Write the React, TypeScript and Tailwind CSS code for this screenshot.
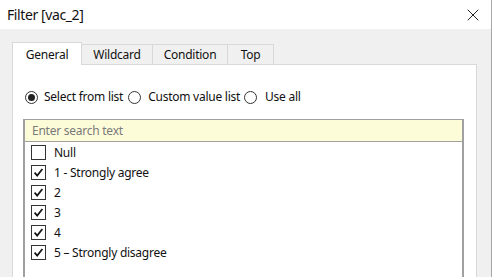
import {X} from "lucide-react";

const items = [
  {label: "Null", checked: false},
  {label: "1 - Strongly agree", checked: true},
  {label: "2", checked: true},
  {label: "3", checked: true},
  {label: "4", checked: true},
  {label: "5 – Strongly disagree", checked: true},
];

const tabs = ["General", "Wildcard", "Condition", "Top"];
const tabWidths = ["w-[70px]", "w-[71px]", "w-[75px]", "w-[46px]"];

const Radio = ({on}: {on: boolean}) => (
  <span className="w-[13px] h-[13px] rounded-full border border-[#333] bg-white flex items-center justify-center shrink-0">
    {on && <span className="w-[7px] h-[7px] rounded-full bg-[#222]" />}
  </span>
);

const Check = ({on}: {on: boolean}) => (
  <span className="w-[15px] h-[15px] border border-[#333] bg-white flex items-center justify-center shrink-0">
    {on && (
      <svg width="11" height="11" viewBox="0 0 11 11">
        <path d="M1.6 5.6 L4.2 8.6 L9.4 2" fill="none" stroke="#111" strokeWidth="1.7" />
      </svg>
    )}
  </span>
);

export default function App() {
  return (
    <main className="w-[492px] h-[277px] overflow-hidden bg-[#f0f0f0] flex flex-col text-[12px] tracking-[-0.25px] text-[#111] border-r border-[#a8a8a8]" style={{fontFamily: '"Noto Sans", "Open Sans", sans-serif'}}>
      <header className="h-[29px] bg-white flex items-center justify-between pl-[7px] pr-[8px] shrink-0">
        <h1 className="text-[14px] leading-none tracking-[-0.4px]">Filter [vac_2]</h1>
        <X size={20} strokeWidth={1.2} className="text-[#222]" />
      </header>

      <div className="flex-1 flex flex-col pt-[13px] pl-[12px] pr-[14px]">
        {/* tabs */}
        <div className="flex items-end h-[22px]">
          {tabs.map((t, i) =>
            i === 0 ? (
              <div key={t} className={`${tabWidths[i]} h-[23px] -mb-px relative z-10 bg-white border border-b-0 border-[#d9d9d9] flex items-center justify-center pt-[1px]`}>
                {t}
              </div>
            ) : (
              <div key={t} className={`${tabWidths[i]} h-[20px] bg-[#f0f0f0] border border-l-0 border-b-0 border-[#d9d9d9] flex items-center justify-center`}>
                {t}
              </div>
            )
          )}
        </div>

        {/* panel */}
        <section className="flex-1 bg-white border border-[#d9d9d9] pt-[24px] pl-[10px] pr-[12px]">
          <div className="flex items-center h-[16px] ml-[2px]">
            <Radio on />
            <span className="ml-[6px] mr-[5px]">Select from list</span>
            <Radio on={false} />
            <span className="ml-[7px] mr-[4px]">Custom value list</span>
            <Radio on={false} />
            <span className="ml-[8px]">Use all</span>
          </div>

          <div className="mt-[14px] h-[200px] border-x-2 border-t border-[#a0a0a0]">
            <div className="h-[22px] bg-[#fdfcd9] border-b border-[#a0a0a0] flex items-center pl-[7px] text-[#7a7a7a]">Enter search text</div>
            <ul className="pt-[3px] pl-[6px]">
              {items.map((it) => (
                <li key={it.label} className="h-[20px] flex items-start gap-[8px]">
                  <Check on={it.checked} />
                  <span className="leading-[15px]">{it.label}</span>
                </li>
              ))}
            </ul>
          </div>
        </section>
      </div>
    </main>
  );
}
